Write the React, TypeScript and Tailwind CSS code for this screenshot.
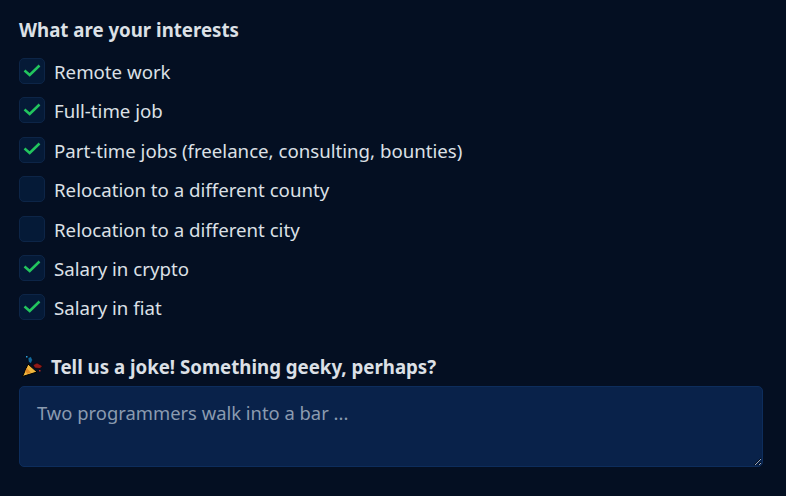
const items: [string, boolean][] = [
  ["Remote work", true],
  ["Full-time job", true],
  ["Part-time jobs (freelance, consulting, bounties)", true],
  ["Relocation to a different county", false],
  ["Relocation to a different city", false],
  ["Salary in crypto", true],
  ["Salary in fiat", true],
];

function Popper() {
  return (
    <svg width="21" height="21" viewBox="0 0 21 21" className="shrink-0">
      <path d="M6 8 L15 16 L0.5 20.5 Z" fill="#f0b73e" stroke="#000" strokeWidth="1" />
      <path d="M4.5 12 L9 16.5 L5.5 17.8 L3.2 15.5 Z" fill="#e08a25" />
      <path d="M6 2 L9 0.5 L10.5 4 L9 7.5 L6.5 6 Z" fill="#12699f" stroke="#000" strokeWidth="0.5" />
      <path d="M11 9 L15 7 L20.5 10 L18 12.5 L13 12 Z" fill="#8f1a1a" stroke="#000" strokeWidth="0.5" />
      <rect x="4" y="0" width="1.5" height="1.5" fill="#2ba0d8" />
      <rect x="17" y="14" width="1.5" height="1.5" fill="#b32525" />
    </svg>
  );
}

export default function App() {
  return (
    <div className="w-[786px] h-[496px] overflow-hidden bg-[#040f22] pl-[19px] pr-[23px] pt-[18px] font-['Noto_Sans',sans-serif] text-[#dce0e6]">
      <h2 className="text-[18.67px] leading-[24px] font-bold">What are your interests</h2>
      <div className="mt-[16px] flex flex-col gap-[13.4px]">
        {items.map(([label, on]) => (
          <label key={label} className="flex h-[26px] items-center gap-[9px]">
            <span className="flex h-[26px] w-[26px] shrink-0 items-center justify-center rounded-[5px] border border-[#0d2547] bg-[#051a37]">
              {on && (
                <svg width="20" height="20" viewBox="0 0 20 20" className="-mt-[3px]" fill="none">
                  <path d="M2.5 10.5 L7.7 15 L17.5 5.5" stroke="#22c55e" strokeWidth="2.5" />
                </svg>
              )}
            </span>
            <span className="mt-[2px] text-[18.67px] leading-[26px]">{label}</span>
          </label>
        ))}
      </div>
      <div className="mt-[34.6px] flex h-[24px] items-center gap-[8px] pl-[3px]">
        <Popper />
        <span className="text-[18.67px] leading-[24px] font-bold">Tell us a joke! Something geeky, perhaps?</span>
      </div>
      <textarea
        className="mt-[7px] block h-[81px] w-full rounded-[5px] border border-[#0d2d5c] bg-[#09224a] px-[17px] py-[12px] text-[18.4px] leading-[28px] outline-none placeholder:text-[#8b9bb0]"
        placeholder="Two programmers walk into a bar ..."
      />
    </div>
  );
}
